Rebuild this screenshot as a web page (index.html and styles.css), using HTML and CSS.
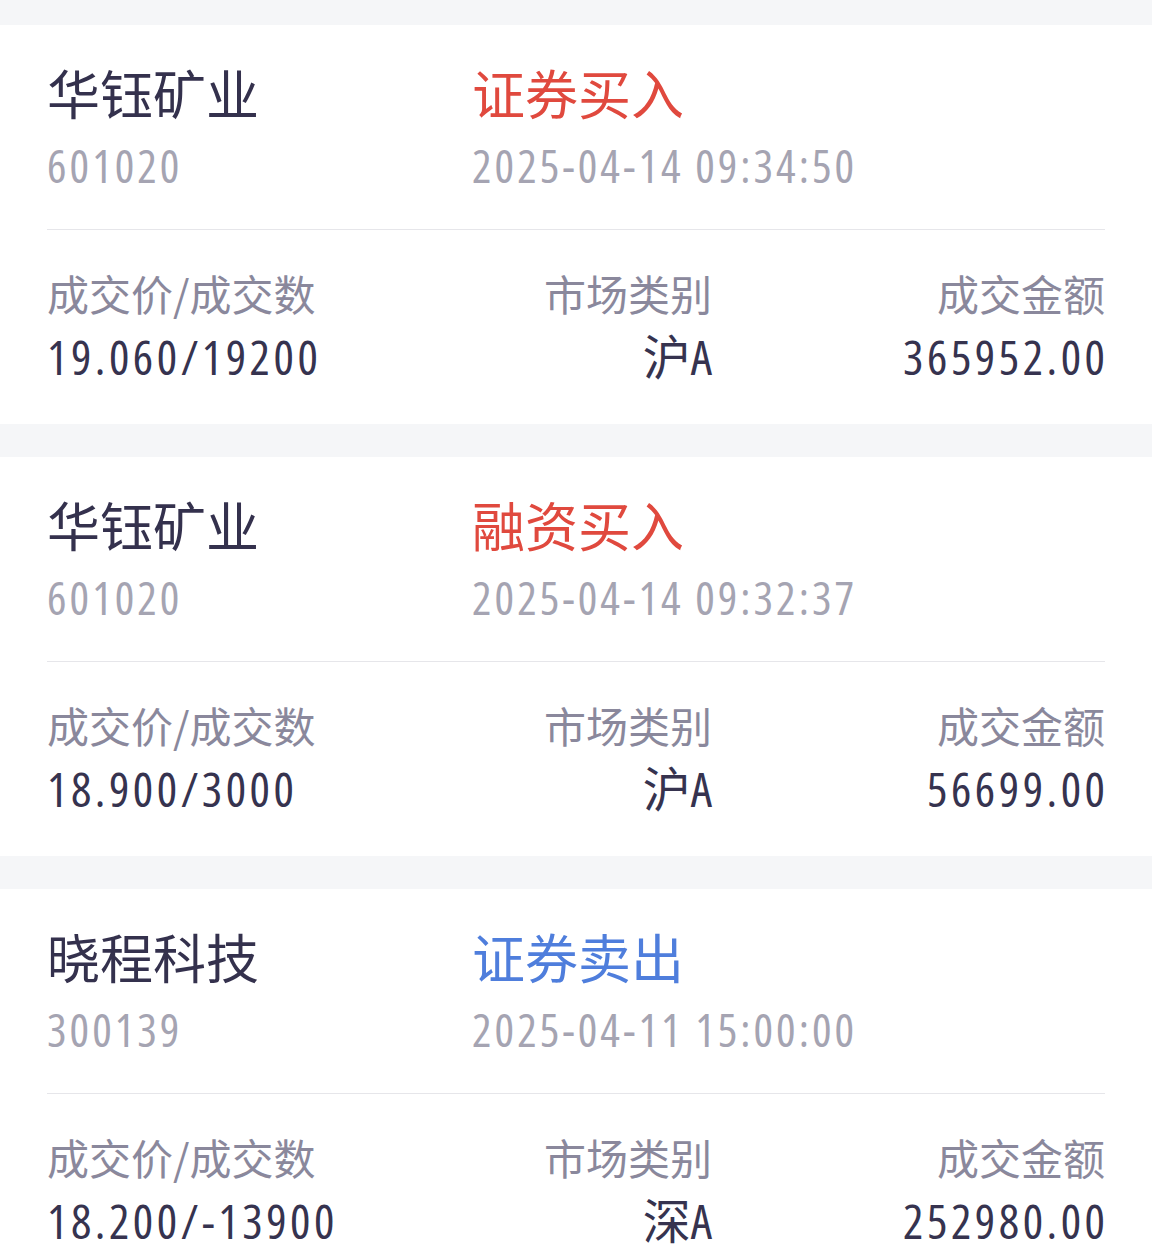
FILE: index.html
```html
<!DOCTYPE html>
<html lang="zh-CN">
<head>
<meta charset="utf-8">
<link rel="stylesheet" href="styles.css">
</head>
<body>
<div class="list">
  <div class="card">
    <div class="head">
      <div class="hcol">
        <div class="name">华钰矿业</div>
        <div class="sub num">601020</div>
      </div>
      <div class="hcol2">
        <div class="type red">证券买入</div>
        <div class="sub num">2025-04-14 09:34:50</div>
      </div>
    </div>
    <div class="divider"></div>
    <div class="grid">
      <div class="c1"><div class="label">成交价/成交数</div><div class="val num">19.060/19200</div></div>
      <div class="c2"><div class="label">市场类别</div><div class="val mkt">沪A</div></div>
      <div class="c3"><div class="label">成交金额</div><div class="val num">365952.00</div></div>
    </div>
  </div>
  <div class="card">
    <div class="head">
      <div class="hcol">
        <div class="name">华钰矿业</div>
        <div class="sub num">601020</div>
      </div>
      <div class="hcol2">
        <div class="type red">融资买入</div>
        <div class="sub num">2025-04-14 09:32:37</div>
      </div>
    </div>
    <div class="divider"></div>
    <div class="grid">
      <div class="c1"><div class="label">成交价/成交数</div><div class="val num">18.900/3000</div></div>
      <div class="c2"><div class="label">市场类别</div><div class="val mkt">沪A</div></div>
      <div class="c3"><div class="label">成交金额</div><div class="val num">56699.00</div></div>
    </div>
  </div>
  <div class="card">
    <div class="head">
      <div class="hcol">
        <div class="name">晓程科技</div>
        <div class="sub num">300139</div>
      </div>
      <div class="hcol2">
        <div class="type blue">证券卖出</div>
        <div class="sub num">2025-04-11 15:00:00</div>
      </div>
    </div>
    <div class="divider"></div>
    <div class="grid">
      <div class="c1"><div class="label">成交价/成交数</div><div class="val num">18.200/-13900</div></div>
      <div class="c2"><div class="label">市场类别</div><div class="val mkt">深A</div></div>
      <div class="c3"><div class="label">成交金额</div><div class="val num">252980.00</div></div>
    </div>
  </div>
</div>
</body>
</html>
```
FILE: styles.css
```css
html, body {
  margin: 0;
  padding: 0;
  background: #f5f6f8;
}
body {
  font-family: "Noto Sans CJK SC", "Noto Sans", sans-serif;
}
.list {
  display: flex;
  flex-direction: column;
  gap: 33px;
  padding-top: 25px;
}
.card {
  background: #ffffff;
  padding: 35px 47px 35px 47px;
}
.head {
  display: flex;
}
.hcol {
  width: 425px;
}
.hcol2 {
  flex: 1;
}
.name, .type {
  font-size: 53px;
  line-height: 64px;
  height: 64px;
  color: #34314d;
}
.red { color: #e0493e; }
.blue { color: #4f7edc; }
.num, .mkt {
  font-family: "Open Sans", "Noto Sans CJK SC", sans-serif;
  font-stretch: 75%;
}
.sub {
  font-size: 46px;
  line-height: 70px;
  height: 70px;
  margin-top: 6px;
  color: #a5a4b2;
  letter-spacing: 3px;
}
.divider {
  height: 1px;
  background: #e6e6ea;
  margin-top: 29px;
  margin-bottom: 31px;
}
.grid {
  display: grid;
  grid-template-columns: 425px 240px 1fr;
}
.c2, .c3 { text-align: right; }
.label {
  font-size: 42px;
  line-height: 64px;
  height: 64px;
  color: #8a889c;
}
.val {
  font-size: 48px;
  line-height: 64px;
  height: 64px;
  color: #36334f;
}
.val.num {
  letter-spacing: 3.5px;
}
.c3 .val.num {
  margin-right: -3.5px;
}
```
